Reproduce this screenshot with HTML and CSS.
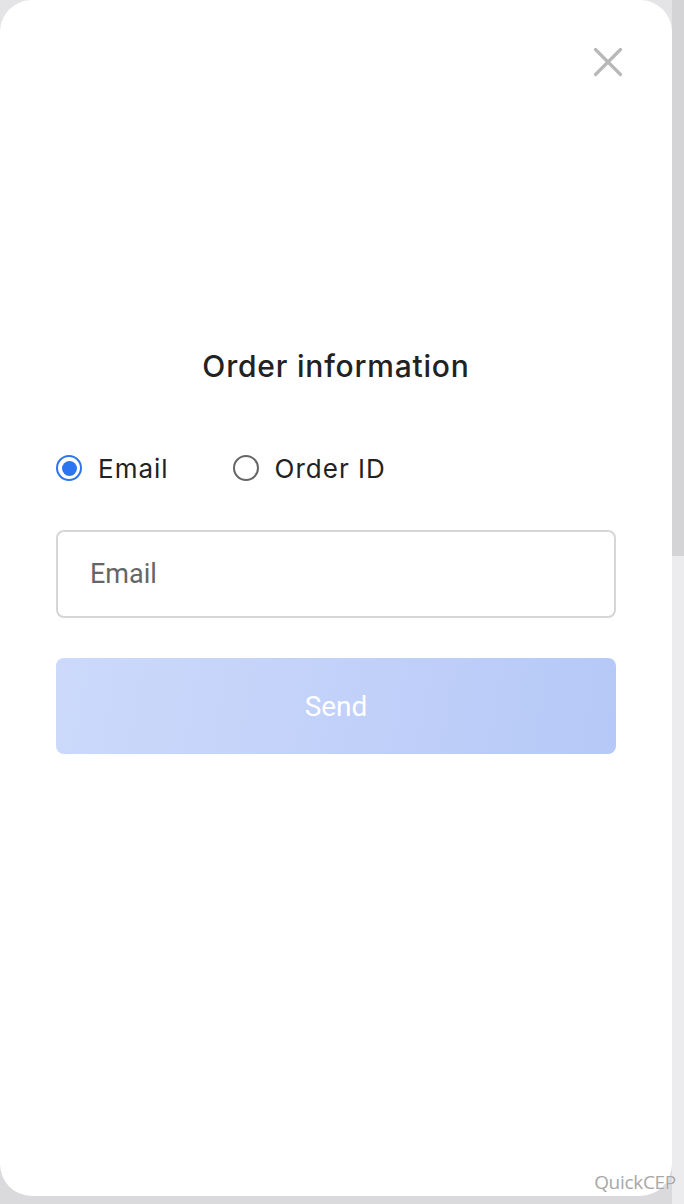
FILE: index.html
```html
<!DOCTYPE html>
<html>
<head>
<meta charset="utf-8">
<link rel="stylesheet" href="styles.css">
</head>
<body>
<div class="page">
  <div class="card">
    <button class="close" aria-label="Close">
      <svg width="32" height="32" viewBox="0 0 32 32"><path d="M3.5 3.5 L28.5 28.5 M28.5 3.5 L3.5 28.5" stroke="#b8b8b8" stroke-width="3.2" stroke-linecap="round" fill="none"/></svg>
    </button>
    <div class="content">
      <h1 class="title">Order information</h1>
      <div class="radios">
        <label class="radio checked"><span class="dot"></span><span class="rlabel">Email</span></label>
        <label class="radio"><span class="dot"></span><span class="rlabel">Order ID</span></label>
      </div>
      <div class="input"><span class="placeholder">Email</span></div>
      <div class="send">Send</div>
    </div>
  </div>
  <div class="scroll"><div class="thumb"></div></div>
  <div class="brand">QuickCEP</div>
</div>
</body>
</html>
```
FILE: styles.css
```css
html, body {
  margin: 0;
  padding: 0;
}
body {
  width: 684px;
  height: 1204px;
  overflow: hidden;
  background: #dcdcde;
  font-family: Inter, "Noto Sans", sans-serif;
}
.page {
  position: relative;
  display: flex;
  height: 1204px;
  background: linear-gradient(180deg, #e4e4e6 0%, #dadadc 100%);
}
.card {
  position: relative;
  width: 672px;
  height: 1196px;
  background: #fff;
  border-radius: 32px;
  box-sizing: border-box;
}
.close {
  position: absolute;
  top: 46px;
  left: 592px;
  width: 32px;
  height: 32px;
  padding: 0;
  border: 0;
  background: none;
}
.close svg { display: block; }
.content {
  padding: 346px 56px 0 56px;
  display: flex;
  flex-direction: column;
}
.title {
  margin: 0;
  text-align: center;
  font-size: 30px;
  font-weight: 500;
  color: #222;
  line-height: 40px;
  letter-spacing: 0.8px;
}
.radios {
  display: flex;
  gap: 64px;
  margin-top: 62px;
  height: 40px;
  align-items: center;
}
.radio {
  display: flex;
  align-items: center;
  gap: 16px;
  font-size: 26px;
  letter-spacing: 1px;
  color: #222;
}
.dot {
  width: 26px;
  height: 26px;
  box-sizing: border-box;
  border-radius: 50%;
  border: 2px solid #666;
  display: flex;
  align-items: center;
  justify-content: center;
}
.radio.checked .dot {
  border: 2.5px solid #2d74f0;
}
.radio.checked .dot::after {
  content: "";
  width: 15px;
  height: 15px;
  border-radius: 50%;
  background: #2d74f0;
}
.input {
  margin-top: 42px;
  height: 88px;
  box-sizing: border-box;
  border: 2px solid #d6d6d6;
  border-radius: 8px;
  display: flex;
  align-items: center;
  padding-left: 32px;
}
.placeholder {
  font-family: Roboto, "Noto Sans", sans-serif;
  font-size: 27px;
  color: #666;
}
.send {
  margin-top: 40px;
  height: 96px;
  border-radius: 8px;
  background: linear-gradient(100deg, #ccd9fb 0%, #c3d2f9 45%, #b5c8f7 100%);
  display: flex;
  align-items: center;
  justify-content: center;
  font-family: Roboto, "Noto Sans", sans-serif;
  font-size: 28px;
  color: #fff;
}
.scroll {
  width: 12px;
  height: 1204px;
  background: #ececee;
  display: flex;
  flex-direction: column;
}
.thumb {
  height: 556px;
  background: #d4d4d6;
}
.brand {
  position: absolute;
  right: 8px;
  bottom: 9px;
  font-family: "Open Sans", sans-serif;
  font-size: 19px;
  color: #a8a8a8;
  letter-spacing: -0.3px;
  text-shadow: 0 0 1px #fff;
}
```
